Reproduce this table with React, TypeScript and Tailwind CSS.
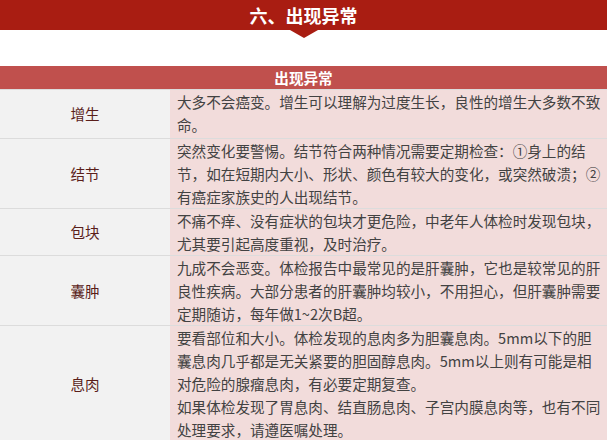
const rows = [
  {
    label: "增生",
    lines: ["大多不会癌变。增生可以理解为过度生长，良性的增生大多数不致", "命。"],
  },
  {
    label: "结节",
    lines: [
      "突然变化要警惕。结节符合两种情况需要定期检查：①身上的结",
      "节，如在短期内大小、形状、颜色有较大的变化，或突然破溃；②",
      "有癌症家族史的人出现结节。",
    ],
  },
  {
    label: "包块",
    lines: ["不痛不痒、没有症状的包块才更危险，中老年人体检时发现包块，", "尤其要引起高度重视，及时治疗。"],
  },
  {
    label: "囊肿",
    lines: [
      "九成不会恶变。体检报告中最常见的是肝囊肿，它也是较常见的肝",
      "良性疾病。大部分患者的肝囊肿均较小，不用担心，但肝囊肿需要",
      "定期随访，每年做1~2次B超。",
    ],
  },
  {
    label: "息肉",
    lines: [
      "要看部位和大小。体检发现的息肉多为胆囊息肉。5mm以下的胆",
      "囊息肉几乎都是无关紧要的胆固醇息肉。5mm以上则有可能是相",
      "对危险的腺瘤息肉，有必要定期复查。",
      "如果体检发现了胃息肉、结直肠息肉、子宫内膜息肉等，也有不同",
      "处理要求，请遵医嘱处理。",
    ],
  },
];

export default function App() {
  return (
    <div
      className="w-[607px] h-[440px] overflow-hidden bg-white"
      style={{ fontFamily: '"Noto Sans CJK SC", "Noto Sans", sans-serif' }}
    >
      {/* top banner */}
      <div className="relative flex h-[30px] items-center justify-center bg-[#a91d12]">
        <span className="text-[18px] font-bold text-white">六、出现异常</span>
        <div className="absolute left-1/2 top-[30px] h-0 w-0 -translate-x-1/2 border-x-[14px] border-t-[8px] border-x-transparent border-t-[#a91d12]" />
      </div>

      <div className="h-[36px]" />

      {/* table */}
      <div className="flex h-[23px] items-center justify-center bg-[#c0504d]">
        <span className="text-[14.6px] font-bold text-white">出现异常</span>
      </div>

      {rows.map((row, i) => (
        <div key={i} className="flex border-t border-[#dcdcdc]">
          <div className="flex w-[170px] shrink-0 items-center justify-center bg-[#f2f2f2] text-[14.6px] text-[#5a1e1a]">
            {row.label}
          </div>
          <div
            className={`flex-1 bg-[#f2dcdb] pl-[7px] text-[14.6px] leading-[23px] text-[#424242] ${i === 0 ? "pb-[2px]" : ""}`}
          >
            {row.lines.map((t, j) => (
              <div key={j} className="whitespace-nowrap">
                {t}
              </div>
            ))}
          </div>
        </div>
      ))}
    </div>
  );
}
